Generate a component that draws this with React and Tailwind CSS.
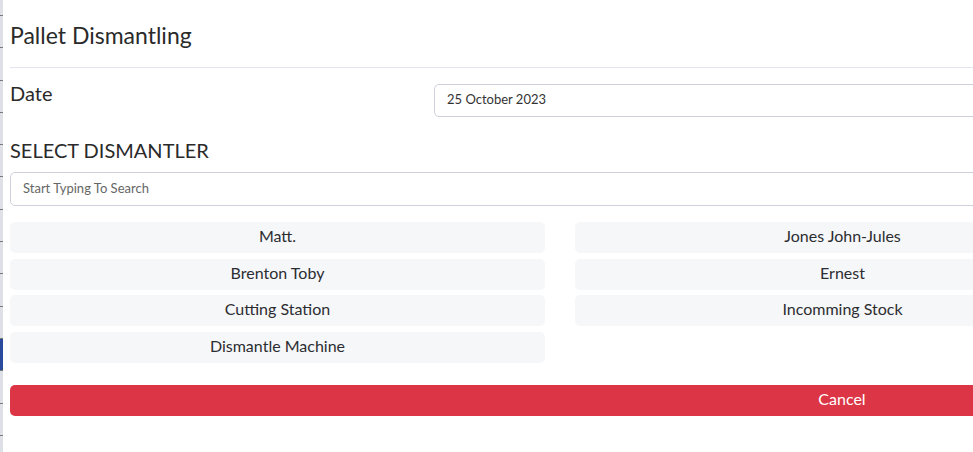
import React from "react";

const left = ["Matt.", "Brenton Toby", "Cutting Station", "Dismantle Machine"];
const right = ["Jones John-Jules", "Ernest", "Incomming Stock"];

function Btn({ label }) {
  return (
    <div className="h-[31px] pb-[3px] rounded-[5px] bg-[#f6f7f9] flex items-center justify-center text-[16px] text-[#2c2d31]">
      {label}
    </div>
  );
}

export default function App() {
  const ticks = Array.from({ length: 14 });
  return (
    <div
      className="flex w-[973px] h-[452px] overflow-hidden bg-white font-normal"
      style={{ fontFamily: "Lato, 'Open Sans', sans-serif" }}
    >
      <div className="w-[3px] shrink-0 flex flex-col bg-[#dde0e6]">
        <div className="h-[15px] shrink-0" />
        {ticks.map((_, i) => (
          <div
            key={i}
            className={
              "h-[32.3px] shrink-0 border-t border-[#777] " +
              (i === 10 ? "bg-[#2a4b9b]" : "")
            }
          />
        ))}
      </div>
      <div className="flex-1 min-w-0 overflow-hidden bg-white">
        <div className="ml-[7px] pt-[21px] pb-[17px] border-b border-[#e3e6f0]">
          <h5 className="text-[23px] leading-[29px] text-[#2a2a2a] whitespace-nowrap">
            Pallet Dismantling
          </h5>
        </div>
        <div className="pl-[7px] w-[1664px]">
          <div className="flex w-[1100px] items-start">
            <div className="w-[424px] shrink-0 mt-[13px] text-[20px] leading-[24px] text-[#2a2a2a]">
              Date
            </div>
            <div className="flex-1 mt-[16px] h-[33px] pb-[1px] border border-[#cfd2dc] rounded-[5px] flex items-center pl-[12px] text-[13px] text-[#333]">
              25 October 2023
            </div>
          </div>
          <div className="mt-[21px] text-[20px] leading-[24px] text-[#2a2a2a] whitespace-nowrap">
            SELECT DISMANTLER
          </div>
          <div className="mt-[10px] w-[1100px] h-[34px] border border-[#cfd2dc] rounded-[5px] flex items-center pl-[12px] text-[13px] text-[#666]">
            Start Typing To Search
          </div>
          <div className="mt-[16px] w-[1100px] grid grid-cols-2 gap-x-[30px] gap-y-[5.5px]">
            <Btn label={left[0]} />
            <Btn label={right[0]} />
            <Btn label={left[1]} />
            <Btn label={right[1]} />
            <Btn label={left[2]} />
            <Btn label={right[2]} />
            <Btn label={left[3]} />
          </div>
          <div className="mt-[22.5px] h-[31px] pb-[3px] w-[1664px] rounded-[5px] bg-[#dc3545] flex items-center justify-center text-white text-[16px]">
            Cancel
          </div>
        </div>
      </div>
    </div>
  );
}
